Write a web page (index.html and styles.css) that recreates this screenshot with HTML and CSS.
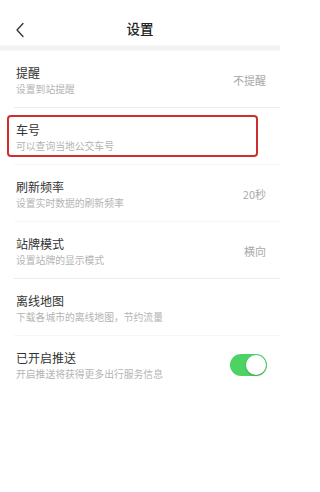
FILE: index.html
```html
<!DOCTYPE html>
<html lang="zh">
<head>
<meta charset="utf-8">
<title>设置</title>
<link rel="stylesheet" href="styles.css">
</head>
<body>
<div class="page">
  <header class="topbar">
    <span class="back">
      <svg width="10" height="16" viewBox="0 0 10 16"><path d="M8 1.5 L2 8 L8 14.5" fill="none" stroke="#333" stroke-width="1.3" stroke-linecap="round" stroke-linejoin="round"/></svg>
    </span>
    <h1 class="title">设置</h1>
  </header>
  <div class="shade"></div>
  <ul class="list">
    <li class="row line">
      <div class="text"><div class="name">提醒</div><div class="desc">设置到站提醒</div></div>
      <span class="value">不提醒</span>
    </li>
    <li class="row line-faint marked">
      <div class="text"><div class="name">车号</div><div class="desc">可以查询当地公交车号</div></div>
      <span class="highlight"></span>
    </li>
    <li class="row line-faint">
      <div class="text"><div class="name">刷新频率</div><div class="desc">设置实时数据的刷新频率</div></div>
      <span class="value">20秒</span>
    </li>
    <li class="row line">
      <div class="text"><div class="name">站牌模式</div><div class="desc">设置站牌的显示模式</div></div>
      <span class="value">横向</span>
    </li>
    <li class="row line-faint">
      <div class="text"><div class="name">离线地图</div><div class="desc">下载各城市的离线地图，节约流量</div></div>
    </li>
    <li class="row">
      <div class="text"><div class="name">已开启推送</div><div class="desc">开启推送将获得更多出行服务信息</div></div>
      <span class="switch on"><span class="knob"></span></span>
    </li>
  </ul>
</div>
</body>
</html>
```

FILE: styles.css
```css
* { box-sizing: border-box; }
html, body { margin: 0; padding: 0; background: #fff; }
body {
  font-family: "Noto Sans CJK SC", "Noto Sans", sans-serif;
  color: #333;
  width: 280px;
  height: 492px;
  overflow: hidden;
}
.topbar {
  height: 45px;
  display: flex;
  align-items: center;
  justify-content: center;
  position: relative;
  padding-top: 13px;
}
.back {
  position: absolute;
  left: 15px;
  top: 22px;
  width: 10px;
  height: 16px;
  display: block;
}
.back svg { display: block; }
.title {
  margin: 0;
  font-size: 13.5px;
  font-weight: 500;
  color: #222;
  line-height: 18px;
  margin-top: -3px;
}
.shade {
  height: 6px;
  background: linear-gradient(#f8f8f8, #f0f0f0 50%, #f8f8f8);
}
.list { list-style: none; margin: 0; padding: 0; }
.row {
  position: relative;
  display: flex;
  align-items: center;
  justify-content: space-between;
  height: 57px;
  padding: 0 14px 0 16px;
}
.row.line::after, .row.line-faint::after {
  content: "";
  position: absolute;
  left: 14px;
  right: 0;
  bottom: 0;
  height: 1px;
  background: #ececec;
}
.row.line-faint::after { background: #f7f7f7; }
.text { display: flex; flex-direction: column; padding-top: 1px; }
.name {
  font-size: 12px;
  line-height: 16px;
  color: #333;
}
.desc {
  font-size: 9.8px;
  line-height: 14px;
  color: #b4b4b4;
  margin-top: 1px;
}
.value {
  font-size: 11px;
  color: #a8a8a8;
  line-height: 14px;
}
.highlight {
  position: absolute;
  left: 7px;
  top: 7px;
  width: 251px;
  height: 42px;
  border: 2px solid #cf2e2b;
  border-radius: 4px;
}
.switch {
  width: 37px;
  height: 22px;
  border-radius: 11px;
  background: #4cd364;
  position: relative;
  margin-right: -1px;
}
.knob {
  position: absolute;
  right: 1px;
  top: 1px;
  width: 20px;
  height: 20px;
  border-radius: 50%;
  background: #fff;
  box-shadow: 0 1px 2px rgba(0,0,0,0.25);
}
```
